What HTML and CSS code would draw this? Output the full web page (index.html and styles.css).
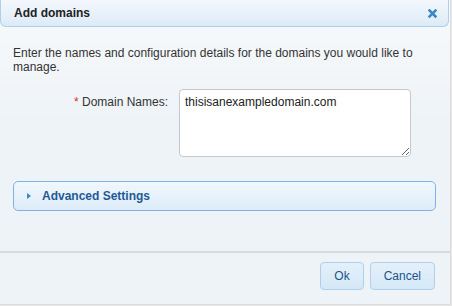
FILE: index.html
```html
<!DOCTYPE html>
<html lang="en">
<head>
  <meta charset="UTF-8">
  <title>Add domains</title>
  <link rel="stylesheet" href="styles.css">
</head>
<body>
  <div class="dialog">
    <div class="titlebar">
      <span class="title">Add domains</span>
      <span class="close">
        <svg width="9" height="9" viewBox="0 0 9 9">
          <path d="M1.5 1.5 L7.5 7.5 M7.5 1.5 L1.5 7.5" stroke="#3a87c8" stroke-width="2.5" stroke-linecap="square"/>
        </svg>
      </span>
    </div>

    <div class="content">
      <p class="intro">Enter the names and configuration details for the domains you would like to manage.</p>

      <div class="field">
        <label for="domains"><span class="req">*</span> Domain Names:</label>
        <textarea id="domains">thisisanexampledomain.com</textarea>
      </div>

      <div class="panel">
        <span class="arrow"></span>
        <span class="panel-title">Advanced Settings</span>
      </div>
    </div>

    <div class="footer">
      <button class="btn">Ok</button>
      <button class="btn">Cancel</button>
    </div>
  </div>
</body>
</html>
```

FILE: styles.css
```css
* {
  margin: 0;
  padding: 0;
  box-sizing: border-box;
}

body {
  background-color: #e8e8e8;
  font-family: 'Liberation Sans', Arial, sans-serif;
  font-size: 12px;
  color: #333;
}

.dialog {
  width: 451px;
  height: 305px;
  background: linear-gradient(#f8fafc, #eef3f7 120px, #eef3f7);
  border-right: 1px solid #dcdcdc;
  border-bottom: 1px solid #dcdcdc;
  display: flex;
  flex-direction: column;
}

.titlebar {
  height: 27px;
  margin-right: 1px;
  border: 1px solid #aed0ea;
  border-top: none;
  border-radius: 0 0 6px 6px;
  background: linear-gradient(#f4f8fd, #dcebf7);
  display: flex;
  align-items: center;
  justify-content: space-between;
  padding: 0 11px 0 13px;
}

.title {
  font-weight: bold;
  font-size: 12px;
  color: #222;
}

.close {
  display: flex;
  width: 9px;
  height: 9px;
}

.content {
  flex: 1;
  padding: 19px 14px 0 13px;
}

.intro {
  line-height: 14px;
}

.field {
  display: flex;
  align-items: flex-start;
  margin-top: 15px;
}

.field label {
  width: 166px;
  text-align: right;
  padding-top: 6px;
  padding-right: 11px;
  line-height: 14px;
  flex-shrink: 0;
}

.req {
  color: #d9321e;
}

.field textarea {
  width: 232px;
  height: 68px;
  border: 1px solid #c8c8c8;
  border-radius: 4px;
  background: #fff;
  padding: 5px 5px;
  font-family: 'Liberation Sans', Arial, sans-serif;
  font-size: 12px;
  line-height: 14px;
  color: #222;
  resize: both;
}

.panel {
  margin-top: 24px;
  width: 423px;
  height: 30px;
  border: 1px solid #7fb3e6;
  border-radius: 5px;
  background: linear-gradient(#f1f7fd, #ddecf9);
  display: flex;
  align-items: center;
  padding-left: 13px;
}

.arrow {
  width: 0;
  height: 0;
  border-top: 3.5px solid transparent;
  border-bottom: 3.5px solid transparent;
  border-left: 4px solid #3a87c8;
  margin-right: 11px;
}

.panel-title {
  font-weight: bold;
  font-size: 12px;
  color: #1e5a96;
}

.footer {
  height: 53px;
  border-top: 2px solid #dadada;
  display: flex;
  justify-content: flex-end;
  align-items: flex-start;
  gap: 6px;
  padding: 9px 17px 0 0;
}

.btn {
  height: 28px;
  padding: 0 13px;
  border: 1px solid #aed0ea;
  border-radius: 4px;
  background: linear-gradient(#e4f0fa, #d5e8f7);
  font-family: 'Liberation Sans', Arial, sans-serif;
  font-size: 12px;
  color: #1d5487;
}

.btn:first-child {
  margin-right: 0;
}

.btn:last-child {
  margin-right: -2px;
}
```
